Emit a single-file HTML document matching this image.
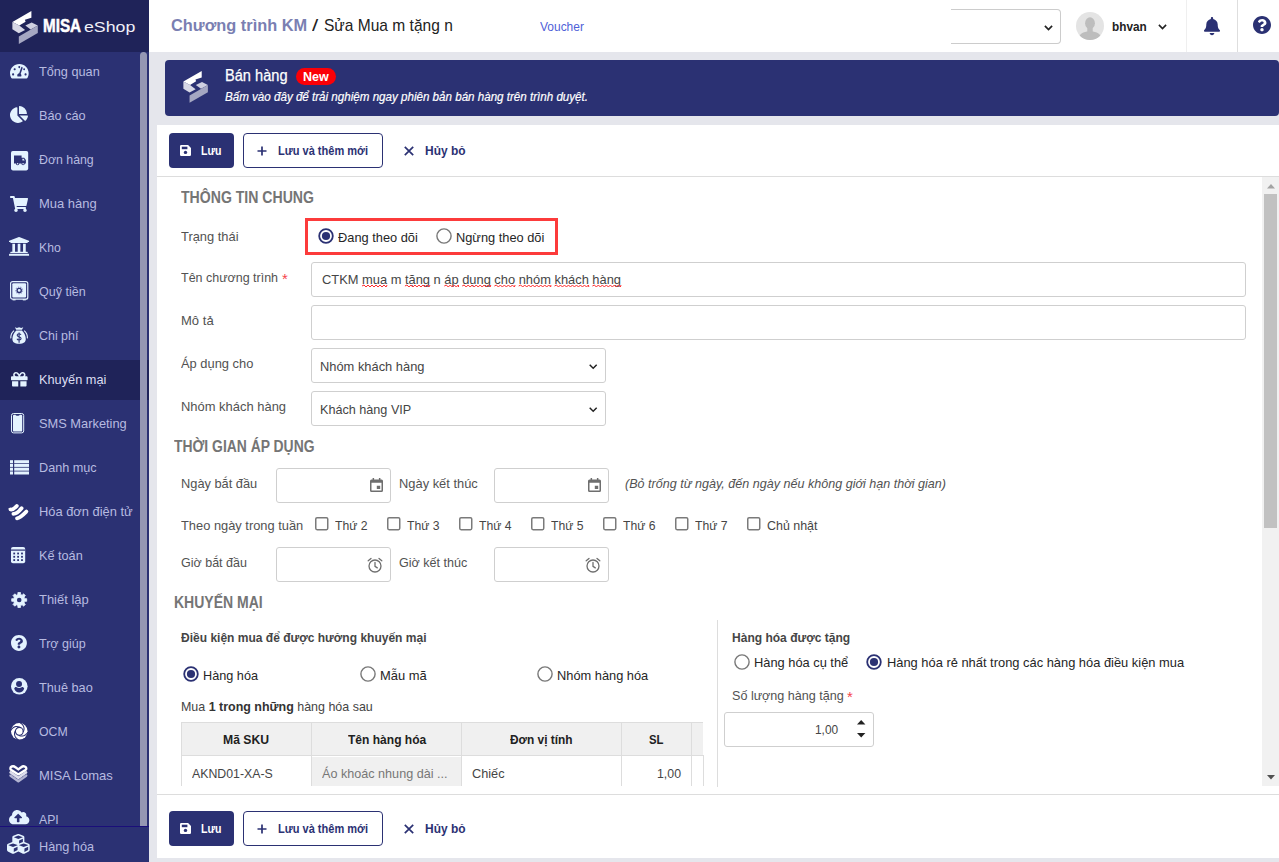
<!DOCTYPE html>
<html lang="vi">
<head>
<meta charset="utf-8">
<title>MISA eShop - Chương trình KM</title>
<style>
*{box-sizing:border-box;margin:0;padding:0}
html,body{width:1279px;height:862px;overflow:hidden;background:#e5e6ec;font-family:"Liberation Sans",sans-serif;color:#333}
.a{position:absolute}
.t{position:absolute;white-space:nowrap;line-height:20px;height:20px;transform-origin:0 50%}
.b{font-weight:bold}
.i{font-style:italic}
#side{position:absolute;left:0;top:0;width:149px;height:862px;background:#2b3173}
#logo{position:absolute;left:0;top:0;width:149px;height:52px;background:#1f2359}
.mi{position:absolute;left:39px;font-size:14px;line-height:20px;height:20px;color:#b5b9df;white-space:nowrap}
.ic{position:absolute;overflow:visible}
#top{position:absolute;left:149px;top:0;width:1130px;height:52px;background:#fff}
#banner{position:absolute;left:165px;top:60px;width:1114px;height:56px;background:#2b3173;border-radius:4px}
.panel{position:absolute;background:#fff}
.inp{position:absolute;background:#fff;border:1px solid #cfcfcf;border-radius:3px}
.btn{position:absolute;border-radius:4px}
.lbl{color:#444;font-size:13px}
.rad{position:absolute;width:16px;height:16px;border-radius:50%;border:1.5px solid #767676;background:#fff}
.rad.on{border:2px solid #2b3173}
.rad.on::after{content:"";position:absolute;left:2px;top:2px;width:8px;height:8px;border-radius:50%;background:#2b3173}
.chk{position:absolute;width:13px;height:13px;border:1.5px solid #767676;border-radius:2px;background:#fff}
</style>
</head>
<body>
<div id="side">
<div id="logo"></div>
<div class="a" style="left:0px;top:360px;width:149px;height:40px;background:#1f2359"></div>
<svg class="ic" style="left:11.7px;top:10.6px" width="26" height="33" viewBox="0 0 26 33" ><polygon fill="#ffffff" points="19.40,0.00 0.40,11.00 7.30,14.60 13.60,10.70 12.90,8.80 19.40,6.80"/><polygon fill="#d7d8e6" points="0.40,11.00 0.40,18.30 6.80,22.20 13.10,19.00 7.30,14.60"/><polygon fill="#cfd0e1" points="13.30,14.60 19.70,11.50 25.80,14.40 18.70,18.50"/><polygon fill="#a5a7c2" points="25.80,14.40 25.80,21.90 6.80,32.90 6.80,25.40"/></svg>
<div class="t b" style="left:42.8px;top:15.5px;font-size:17.5px;color:#fff;-webkit-text-stroke:0.500px #fff;transform-origin:0 50%;transform:scaleX(0.870)">MISA</div>
<div class="t" style="left:83.500px;top:16.700px;font-size:15.500px;color:#f0f0f8;transform-origin:0 50%;transform:scaleX(1.145);font-weight:normal">eShop</div>
<div class="t" style="left:39.3px;top:62.20px;font-size:13.5px;color:#b7bbe0;transform:scaleX(0.9403);">Tổng quan</div>
<div class="t" style="left:39.3px;top:106.20px;font-size:13.5px;color:#b7bbe0;transform:scaleX(0.9427);">Báo cáo</div>
<div class="t" style="left:39.3px;top:150.20px;font-size:13.5px;color:#b7bbe0;transform:scaleX(0.9133);">Đơn hàng</div>
<div class="t" style="left:39.3px;top:194.20px;font-size:13.5px;color:#b7bbe0;transform:scaleX(0.9610);">Mua hàng</div>
<div class="t" style="left:39.3px;top:238.20px;font-size:13.5px;color:#b7bbe0;transform:scaleX(0.9034);">Kho</div>
<div class="t" style="left:39.3px;top:282.20px;font-size:13.5px;color:#b7bbe0;transform:scaleX(0.9289);">Quỹ tiền</div>
<div class="t" style="left:39.3px;top:326.20px;font-size:13.5px;color:#b7bbe0;transform:scaleX(0.9211);">Chi phí</div>
<div class="t" style="left:39.3px;top:370.20px;font-size:13.5px;color:#dcdef2;transform:scaleX(0.9440);">Khuyến mại</div>
<div class="t" style="left:39.3px;top:414.20px;font-size:13.5px;color:#b7bbe0;transform:scaleX(0.9504);">SMS Marketing</div>
<div class="t" style="left:39.3px;top:458.20px;font-size:13.5px;color:#b7bbe0;transform:scaleX(0.9378);">Danh mục</div>
<div class="t" style="left:39.3px;top:502.20px;font-size:13.5px;color:#b7bbe0;transform:scaleX(0.9542);">Hóa đơn điện tử</div>
<div class="t" style="left:39.3px;top:546.20px;font-size:13.5px;color:#b7bbe0;transform:scaleX(0.9391);">Kế toán</div>
<div class="t" style="left:39.3px;top:590.20px;font-size:13.5px;color:#b7bbe0;transform:scaleX(0.9599);">Thiết lập</div>
<div class="t" style="left:39.3px;top:634.20px;font-size:13.5px;color:#b7bbe0;transform:scaleX(0.9272);">Trợ giúp</div>
<div class="t" style="left:39.3px;top:678.20px;font-size:13.5px;color:#b7bbe0;transform:scaleX(0.9414);">Thuê bao</div>
<div class="t" style="left:39.3px;top:722.20px;font-size:13.5px;color:#b7bbe0;transform:scaleX(0.9112);">OCM</div>
<div class="t" style="left:39.3px;top:766.20px;font-size:13.5px;color:#b7bbe0;transform:scaleX(0.9630);">MISA Lomas</div>
<div class="t" style="left:39.3px;top:810.20px;font-size:13.5px;color:#b7bbe0;transform:scaleX(0.9054);">API</div>
<div class="a" style="left:0px;top:826px;width:149px;height:36px;background:#2b3173;border-top:1px solid #1a0e7a"></div>
<div class="t" style="left:39.3px;top:837.20px;font-size:13.5px;color:#b7bbe0;transform:scaleX(0.9394);">Hàng hóa</div>
<div class="a" style="left:140px;top:52px;width:7px;height:774px;background:#9597b3;border-radius:3.500px 3.500px 0 0"></div>
<svg class="ic" style="left:9.90px;top:63.58px" width="18.70" height="14.54" viewBox="0 32 576 448"><path fill="#e4f3ff" d="M288 32C128.94 32 0 160.94 0 320c0 52.8 14.25 102.26 39.06 144.8 5.61 9.62 16.3 15.2 27.44 15.2h443c11.14 0 21.83-5.58 27.44-15.2C561.75 422.26 576 372.8 576 320c0-159.06-128.94-288-288-288zm0 64c14.71 0 26.58 10.13 30.32 23.65-1.11 2.26-2.64 4.23-3.45 6.67l-9.22 27.67c-5.13 3.49-10.97 6.01-17.64 6.01-17.67 0-32-14.33-32-32S270.33 96 288 96zM96 384c-17.67 0-32-14.33-32-32s14.33-32 32-32 32 14.33 32 32-14.33 32-32 32zm48-160c-17.67 0-32-14.33-32-32s14.33-32 32-32 32 14.33 32 32-14.33 32-32 32zm246.77-72.41l-61.33 184C343.13 347.33 352 364.54 352 384c0 11.72-3.38 22.55-8.88 32H232.88c-5.5-9.45-8.88-20.28-8.88-32 0-33.94 26.5-61.43 59.9-63.59l61.34-184.01c4.17-12.56 17.73-19.45 30.36-15.17 12.57 4.19 19.35 17.79 15.17 30.36zm14.66 57.2l15.52-46.55c3.47-1.29 7.13-2.23 11.05-2.23 17.67 0 32 14.33 32 32s-14.33 32-32 32c-11.38-.01-20.89-6.28-26.57-15.22zM480 384c-17.67 0-32-14.33-32-32s14.33-32 32-32 32 14.33 32 32-14.33 32-32 32z"/></svg>
<svg class="ic" style="left:10.00px;top:105.98px" width="18.00" height="16.94" viewBox="0 0 544 512"><path fill="#e4f3ff" d="M527.79 288H290.5l158.03 158.03c6.04 6.04 15.98 6.53 22.19.68 38.7-36.46 65.32-85.61 73.13-140.86 1.34-9.46-6.51-17.85-16.06-17.85zm-15.83-64.8C503.72 103.74 408.26 8.28 288.8.04 279.68-.59 272 7.1 272 16.24V240h223.77c9.14 0 16.82-7.68 16.19-16.8zM224 288V50.71c0-9.55-8.39-17.4-17.84-16.06C86.99 51.49-4.1 155.6.14 280.37 4.5 408.51 114.83 513.59 243.03 511.98c50.4-.63 96.97-16.87 135.26-44.03 7.9-5.6 8.42-17.23 1.570-24.08L224 288z"/></svg>
<svg class="ic" style="left:10.9px;top:150.7px" width="17.2" height="19.4" viewBox="0 0 17.2 19.4"><rect x="0" y="0" width="17.2" height="19.4" rx="1.8" fill="#e4f3ff"/><path fill="#2b3173" d="M3 4.6h7.6v2.2h2.6l1.7 2.2v3.6h-1.1a1.7 1.7 0 0 1-3.4 0H8.300a1.700 1.700 0 0 1-3.400 0H3zM11.400 7.800v1.600h2.300l-1.100-1.600z"/><circle cx="6.6" cy="12.700" r="0.800" fill="#e4f3ff"/><circle cx="12.100" cy="12.700" r="0.800" fill="#e4f3ff"/></svg>
<svg class="ic" style="left:10.00px;top:196.35px" width="18.00" height="16.00" viewBox="0 0 576 512"><path fill="#e4f3ff" d="M528.12 301.319l47.273-208C578.806 78.301 567.391 64 551.99 64H159.208l-9.166-44.81C147.758 8.021 137.93 0 126.529 0H24C10.745 0 0 10.745 0 24v16c0 13.255 10.745 24 24 24h69.883l70.248 343.435C147.325 417.1 136 435.222 136 456c0 30.928 25.072 56 56 56s56-25.072 56-56c0-15.674-6.447-29.835-16.824-40h209.647C430.447 426.165 424 440.326 424 456c0 30.928 25.072 56 56 56s56-25.072 56-56c0-22.172-12.888-41.332-31.579-50.405l5.517-24.276c3.413-15.018-8.002-29.319-23.403-29.319H218.117l-6.545-32h293.145c11.206 0 20.920-7.754 23.403-18.681z"/></svg>
<svg class="ic" style="left:8.50px;top:236.62px" width="20.10" height="18.76" viewBox="16 32 480 448"><path fill="#e4f3ff" d="M496 128v16a8 8 0 0 1-8 8h-24v12c0 6.627-5.373 12-12 12H60c-6.627 0-12-5.373-12-12v-12H24a8 8 0 0 1-8-8v-16a8 8 0 0 1 4.941-7.392l232-88a7.996 7.996 0 0 1 6.118 0l232 88A8 8 0 0 1 496 128zm-24 304H40c-13.255 0-24 10.745-24 24v16a8 8 0 0 0 8 8h464a8 8 0 0 0 8-8v-16c0-13.255-10.745-24-24-24zM96 192v192H60c-6.627 0-12 5.373-12 12v20h416v-20c0-6.627-5.373-12-12-12h-36V192h-64v192h-64V192h-64v192h-64V192H96z"/></svg>
<svg class="ic" style="left:9.9px;top:281.3px" width="18.4" height="19.700" viewBox="0 0 18.400 19.700"><rect x="0.600" y="0.600" width="17.200" height="17.600" rx="2" fill="none" stroke="#e4f3ff" stroke-width="1.200"/><rect x="2.300" y="2.300" width="13.800" height="14.200" rx="1" fill="#e4f3ff"/><rect x="2.600" y="18.200" width="3" height="1.200" fill="#e4f3ff"/><rect x="12.800" y="18.200" width="3" height="1.200" fill="#e4f3ff"/><circle cx="9.200" cy="9.400" r="3.300" fill="none" stroke="#9aa0cc" stroke-width="1.400" stroke-dasharray="1.300 1"/><circle cx="9.200" cy="9.400" r="2.100" fill="none" stroke="#2b3173" stroke-width="1.300"/></svg>
<svg class="ic" style="left:9.9px;top:326.700px" width="18.200" height="16.800" viewBox="0 0 18.200 16.800"><path fill="#e4f3ff" d="M6.200 2.700L4.900 0.300 7 1 9.100 0.200 11.200 1 13.300 0.300 12 2.700z"/><path fill="#e4f3ff" d="M6.300 3.400h5.600c2.200 1.900 3.900 5.300 3.900 8.600 0 3.200-2.100 4.700-6.700 4.700s-6.700-1.500-6.700-4.700c0-3.300 1.700-6.700 3.900-8.600z"/><path fill="none" stroke="#e4f3ff" stroke-width="1.100" d="M4 3.600C1.700 5.500 0.600 8.200 0.800 11.400M14.200 3.600c2.300 1.900 3.400 4.600 3.200 7.800"/><path fill="none" stroke="#2b3173" stroke-width="1.100" d="M11 7.900c-.3-.8-1-1.200-1.900-1.200-1.100 0-1.900.6-1.900 1.500 0 2.100 3.900 1.100 3.900 3.300 0 .900-.800 1.500-2 1.500-1 0-1.800-.500-2.100-1.300M9.100 5.400v10.300"/></svg>
<svg class="ic" style="left:10.90px;top:371.74px" width="16.60" height="14.53" viewBox="0 32 512 448"><path fill="#e4f3ff" d="M32 448c0 17.700 14.300 32 32 32h160V320H32v128zm256 32h160c17.700 0 32-14.300 32-32V320H288v160zm192-320h-42.100c6.200-12.100 10.100-25.500 10.100-40 0-48.500-39.500-88-88-88-41.600 0-68.500 21.300-103 68.300-34.500-47-61.400-68.300-103-68.300-48.500 0-88 39.500-88 88 0 14.500 3.800 27.900 10.100 40H32c-17.700 0-32 14.300-32 32v80c0 8.800 7.200 16 16 16h480c8.800 0 16-7.200 16-16v-80c0-17.700-14.300-32-32-32zm-326.100 0c-22.100 0-40-17.900-40-40s17.900-40 40-40c19.900 0 34.600 3.300 86.100 80h-86.100zm206.100 0h-86.100c51.400-76.500 65.700-80 86.100-80 22.100 0 40 17.900 40 40s-17.900 40-40 40z"/></svg>
<svg class="ic" style="left:10.900px;top:412.700px" width="13.200" height="20.400" viewBox="0 0 13.200 20.400"><rect x="0.500" y="0.500" width="12.200" height="19.400" rx="2" fill="none" stroke="#e4f3ff" stroke-width="1"/><path fill="#e4f3ff" d="M2 3a1.200 1.200 0 0 1 1.200-1.200H4.500c.3.700.8 1 2.100 1s1.800-.3 2.100-1h1.300A1.200 1.200 0 0 1 11.200 3v14.400a1.200 1.200 0 0 1-1.200 1.200H3.200A1.200 1.200 0 0 1 2 17.400z"/></svg>
<svg class="ic" style="left:9.900px;top:459.600px" width="19" height="14.800" viewBox="0 0 19 14.800"><rect x="0" y="0.2" width="3" height="3" fill="#e4f3ff"/><rect x="4.200" y="0.2" width="14.800" height="3" fill="#e4f3ff"/><rect x="0" y="3.9" width="3" height="3" fill="#e4f3ff"/><rect x="4.200" y="3.9" width="14.800" height="3" fill="#e4f3ff"/><rect x="0" y="7.7" width="3" height="3" fill="#e4f3ff"/><rect x="4.200" y="7.7" width="14.800" height="3" fill="#e4f3ff"/><rect x="0" y="11.5" width="3" height="3" fill="#e4f3ff"/><rect x="4.200" y="11.5" width="14.800" height="3" fill="#e4f3ff"/></svg>
<svg class="ic" style="left:8.200px;top:503.700px" width="20.400" height="16.400" viewBox="0 0 20.400 16.400"><g fill="none" stroke="#ffffff" stroke-width="3.800" stroke-linecap="round"><path d="M2.600 5.500C5 6 6.500 4.500 8.800 1.900"/><path d="M5.400 9.800C8.500 9.800 11 7.500 13.600 4.300"/><path d="M9 14.300c3.400-.5 6.200-3.500 9.400-6.800"/></g><path fill="#ffffff" d="M0 4.500l3.500 0 -1 2.500z"/></svg>
<svg class="ic" style="left:10.900px;top:547px" width="14.200" height="16.200" viewBox="0 0 14.200 16.200"><rect x="0" y="0" width="14.200" height="16.200" rx="2" fill="#e4f3ff"/><rect x="0" y="2.500" width="14.200" height="1.200" fill="#2b3173"/><rect x="2.3" y="5.6" width="1.800" height="1.800" fill="#2b3173"/><rect x="2.3" y="8.9" width="1.800" height="1.800" fill="#2b3173"/><rect x="2.3" y="12.2" width="1.800" height="1.800" fill="#2b3173"/><rect x="6.2" y="5.6" width="1.800" height="1.800" fill="#2b3173"/><rect x="6.2" y="8.9" width="1.800" height="1.800" fill="#2b3173"/><rect x="6.2" y="12.2" width="1.800" height="1.800" fill="#2b3173"/><rect x="10.1" y="5.6" width="1.800" height="1.800" fill="#2b3173"/><rect x="10.1" y="8.9" width="1.800" height="1.800" fill="#2b3173"/><rect x="10.1" y="12.2" width="1.800" height="1.800" fill="#2b3173"/></svg>
<svg class="ic" style="left:10.900px;top:591.700px" width="16.400" height="16" viewBox="0 0 16.400 16"><polygon points="6.89,0.51 9.51,0.51 9.53,2.46 11.18,3.14 12.57,1.78 14.42,3.63 13.06,5.02 13.74,6.67 15.69,6.69 15.69,9.31 13.74,9.33 13.06,10.98 14.42,12.37 12.57,14.22 11.18,12.86 9.53,13.54 9.51,15.49 6.89,15.49 6.87,13.54 5.22,12.86 3.83,14.22 1.98,12.37 3.34,10.98 2.66,9.33 0.71,9.31 0.71,6.69 2.66,6.67 3.34,5.02 1.98,3.63 3.83,1.78 5.22,3.14 6.87,2.46" fill="#e4f3ff" stroke="#e4f3ff" stroke-width="0.800" stroke-linejoin="round"/><circle cx="8.2" cy="8" r="2.3" fill="#2b3173"/></svg>
<svg class="ic" style="left:11.40px;top:635.45px" width="15.90" height="15.90" viewBox="8 8 496 496"><path fill="#e4f3ff" d="M504 256c0 136.997-111.043 248-248 248S8 392.997 8 256C8 119.083 119.043 8 256 8s248 111.083 248 248zM262.655 90c-54.497 0-89.255 22.957-116.549 63.758-3.536 5.286-2.353 12.415 2.715 16.258l34.699 26.310c5.205 3.947 12.621 3.008 16.665-2.122 17.864-22.658 30.113-35.797 57.303-35.797 20.429 0 45.698 13.148 45.698 32.958 0 14.976-12.363 22.667-32.534 33.976C247.128 238.528 216 254.941 216 296v4c0 6.627 5.373 12 12 12h56c6.627 0 12-5.373 12-12v-1.333c0-28.462 83.186-29.647 83.186-106.667 0-58.002-60.165-102-116.531-102zM256 338c-25.365 0-46 20.635-46 46 0 25.364 20.635 46 46 46s46-20.636 46-46c0-25.365-20.635-46-46-46z"/></svg>
<svg class="ic" style="left:11.050px;top:677.800px" width="16.600" height="16.600" viewBox="0 0 16.600 16.600"><circle cx="8.300" cy="8.300" r="8.300" fill="#e4f3ff"/><circle cx="8.050" cy="6.050" r="3" fill="#2b3173"/><path fill="#2b3173" d="M3.200 10.500C4.200 8.800 5 9 5.600 9.300 7 10.200 9.300 10.200 10.700 9.300 11.300 9 12.100 8.800 13.200 10.500 12.500 13 10.500 14.600 8.200 14.600 5.900 14.600 3.900 13 3.200 10.500z"/></svg>
<svg class="ic" style="left:10.800px;top:722.800px" width="16.600" height="16.600" viewBox="0 0 16.600 16.600"><circle cx="8.3" cy="8.3" r="8.3" fill="#ffffff"/><circle cx="8.3" cy="8.3" r="3.900" fill="none" stroke="#2b3173" stroke-width="1.100"/><path d="M8.98 4.46 L7.91 3.95 L6.95 3.65 L5.95 3.54 L4.93 3.60 L3.91 3.85 L2.92 4.27 L1.99 4.86 L1.13 5.61 L0.37 6.52 L-0.27 7.55" fill="none" stroke="#2b3173" stroke-width="1.050"/><path d="M12.14 8.98 L12.65 7.91 L12.95 6.95 L13.06 5.95 L13.00 4.93 L12.75 3.91 L12.33 2.92 L11.74 1.99 L10.99 1.13 L10.08 0.37 L9.05 -0.27" fill="none" stroke="#2b3173" stroke-width="1.050"/><path d="M7.62 12.14 L8.69 12.65 L9.65 12.95 L10.65 13.06 L11.67 13.00 L12.69 12.75 L13.68 12.33 L14.61 11.74 L15.47 10.99 L16.23 10.08 L16.87 9.05" fill="none" stroke="#2b3173" stroke-width="1.050"/><path d="M4.46 7.62 L3.95 8.69 L3.65 9.65 L3.54 10.65 L3.60 11.67 L3.85 12.69 L4.27 13.68 L4.86 14.61 L5.61 15.47 L6.52 16.23 L7.55 16.87" fill="none" stroke="#2b3173" stroke-width="1.050"/></svg>
<svg class="ic" style="left:8.600px;top:765.400px" width="18.700" height="18" viewBox="0 0 18.700 18"><path fill="none" stroke="#b3b5d2" stroke-width="2.600" stroke-linejoin="round" stroke-linecap="round" d="M1.600 10.600L9.350 16.100 17.100 10.600"/><path fill="none" stroke="#dddeec" stroke-width="2.600" stroke-linejoin="round" stroke-linecap="round" d="M1.600 7.400L9.350 12.900 17.100 7.400"/><path fill="none" stroke="#2b3173" stroke-width="0.500" stroke-dasharray="1 0.800" d="M1.200 9.100L9.350 14.700 17.500 9.100"/><path fill="none" stroke="#ffffff" stroke-width="2.400" stroke-linejoin="round" d="M9.350 9.400L2.300 5C.900 4 1.100 2.100 2.800 1.500 4.200 1 5.500 1.400 6.500 2.300L9.350 4.400 12.200 2.300c1-.900 2.300-1.300 3.700-.800 1.700.600 1.900 2.500.500 3.500z"/></svg>
<svg class="ic" style="left:8.90px;top:810.11px" width="20.40" height="14.28" viewBox="0 32 640 448"><path fill="#e4f3ff" d="M537.600 226.600c4.100-10.700 6.400-22.400 6.400-34.600 0-53-43-96-96-96-19.700 0-38.100 6-53.300 16.200C367 64.200 315.300 32 256 32c-88.400 0-160 71.600-160 160 0 2.700.100 5.400.200 8.100C40.200 219.800 0 273.200 0 336c0 79.500 64.500 144 144 144h368c70.700 0 128-57.300 128-128 0-61.900-44-113.600-102.400-125.400zM393.400 288H328v112c0 8.800-7.200 16-16 16h-48c-8.800 0-16-7.200-16-16V288h-65.400c-14.300 0-21.400-17.200-11.300-27.300l105.400-105.400c6.200-6.200 16.400-6.200 22.600 0l105.400 105.400c10.100 10.100 2.900 27.300-11.300 27.300z"/></svg>
<svg class="ic" style="left:6.80px;top:834.37px" width="22.70" height="19.86" viewBox="0 32 512 448"><path fill="#e4f3ff" d="M488.600 250.200L392 214V105.500c0-15-9.300-28.400-23.400-33.700l-100-37.500c-8.100-3.100-17.100-3.100-25.300 0l-100 37.500c-14.100 5.300-23.400 18.700-23.400 33.700V214l-96.600 36.200C9.300 255.500 0 268.900 0 283.900V394c0 13.600 7.700 26.100 19.900 32.200l100 50c10.100 5.100 22.100 5.100 32.200 0l103.900-52 103.900 52c10.100 5.100 22.100 5.100 32.200 0l100-50c12.200-6.100 19.900-18.600 19.900-32.200V283.900c0-15-9.300-28.400-23.400-33.700zM358 214.800l-85 31.900v-68.200l85-37v73.300zM154 104.100l102-38.200 102 38.200v.600l-102 41.400-102-41.400v-.600zm84 291.100l-85 42.500v-79.100l85-38.800v75.400zm0-112l-102 41.400-102-41.400v-.600l102-38.200 102 38.200v.600zm240 112l-85 42.500v-79.100l85-38.800v75.400zm0-112l-102 41.400-102-41.400v-.600l102-38.200 102 38.200v.600z"/></svg>
</div>
<div id="top"></div>
<div class="t b" style="left:170.6px;top:13.60px;font-size:17px;color:#7a7fb2;line-height:24px;height:24px;transform:scaleX(0.9630);">Chương trình KM</div>
<div class="t" style="left:311.9px;top:13.60px;font-size:17px;color:#222;line-height:24px;height:24px;transform:scaleX(1.3126);">/</div>
<div class="t" style="left:323.7px;top:13.60px;font-size:17px;color:#222;line-height:24px;height:24px;transform:scaleX(0.9145);">Sửa Mua m tặng n</div>
<div class="t" style="left:540.2px;top:16.70px;font-size:12.5px;color:#4f5fd8;transform:scaleX(0.9571);">Voucher</div>
<div class="a" style="left:951px;top:9px;width:110px;height:35px;border:1px solid #cccccc;border-left:none;border-radius:0 4px 4px 0;background:#fff"></div>
<svg class="ic" style="left:1044px;top:25px" width="9" height="6" viewBox="0 0 9 6" ><path d="M0.900 0.900L4.500 4.500 8.100 0.900" fill="none" stroke="#222" stroke-width="1.700"/></svg>
<svg class="ic" style="left:1076px;top:12px" width="28" height="28" viewBox="0 0 28 28"><defs><clipPath id="avc"><circle cx="14" cy="14" r="14"/></clipPath></defs><circle cx="14" cy="14" r="14" fill="#e4e4e4"/><g clip-path="url(#avc)" fill="#bdbdbd"><ellipse cx="14" cy="11.200" rx="4.900" ry="5.900"/><path d="M2.500 28c0-5.500 3-7.300 8.500-8.600h6c5.500 1.300 8.500 3.100 8.500 8.600z"/><rect x="11.300" y="15" width="5.400" height="6"/></g></svg>
<div class="t b" style="left:1112px;top:17.00px;font-size:13.5px;color:#222;transform:scaleX(0.8728);">bhvan</div>
<svg class="ic" style="left:1157.5px;top:24px" width="9" height="6" viewBox="0 0 9 6" ><path d="M0.900 0.900L4.500 4.500 8.100 0.900" fill="none" stroke="#222" stroke-width="1.600"/></svg>
<div class="a" style="left:1186px;top:0px;width:1px;height:52px;background:#efefef"></div>
<div class="a" style="left:1237px;top:0px;width:1px;height:52px;background:#dedede"></div>
<svg class="ic" style="left:1204px;top:16.500px" width="16" height="18.300" viewBox="0 0 448 512"><path fill="#2b3173" d="M224 512c35.320 0 63.970-28.650 63.970-64H160.030c0 35.350 28.650 64 63.970 64zm215.390-149.710c-19.320-20.760-55.470-51.990-55.470-154.290 0-77.700-54.480-139.900-127.940-155.160V32c0-17.670-14.320-32-31.980-32s-31.980 14.330-31.980 32v20.840C118.560 68.100 64.080 130.300 64.080 208c0 102.300-36.150 133.530-55.470 154.290-6 6.450-8.660 14.160-8.610 21.710.110 16.400 12.980 32 32.100 32h383.800c19.120 0 32-15.600 32.100-32 .050-7.550-2.610-15.270-8.610-21.710z"/></svg>
<svg class="ic" style="left:1252.500px;top:16px" width="18" height="18" viewBox="8 8 496 496"><path fill="#2b3173" d="M504 256c0 136.997-111.043 248-248 248S8 392.997 8 256C8 119.083 119.043 8 256 8s248 111.083 248 248zM262.655 90c-54.497 0-89.255 22.957-116.549 63.758-3.536 5.286-2.353 12.415 2.715 16.258l34.699 26.310c5.205 3.947 12.621 3.008 16.665-2.122 17.864-22.658 30.113-35.797 57.303-35.797 20.429 0 45.698 13.148 45.698 32.958 0 14.976-12.363 22.667-32.534 33.976C247.128 238.528 216 254.941 216 296v4c0 6.627 5.373 12 12 12h56c6.627 0 12-5.373 12-12v-1.333c0-28.462 83.186-29.647 83.186-106.667 0-58.002-60.165-102-116.531-102zM256 338c-25.365 0-46 20.635-46 46 0 25.364 20.635 46 46 46s46-20.636 46-46c0-25.365-20.635-46-46-46z"/></svg>
<div id="banner"></div>
<svg class="ic" style="left:182.5px;top:71px" width="25.09" height="31.845" viewBox="0 0 26 33" ><polygon fill="#ffffff" points="19.40,0.00 0.40,11.00 7.30,14.60 13.60,10.70 12.90,8.80 19.40,6.80"/><polygon fill="#d7d8e6" points="0.40,11.00 0.40,18.30 6.80,22.20 13.10,19.00 7.30,14.60"/><polygon fill="#cfd0e1" points="13.30,14.60 19.70,11.50 25.80,14.40 18.70,18.50"/><polygon fill="#a5a7c2" points="25.80,14.40 25.80,21.90 6.80,32.90 6.80,25.40"/></svg>
<div class="t" style="left:225px;top:66.30px;font-size:16px;color:#fff;transform:scaleX(0.9123);-webkit-text-stroke:0.250px #fff;">Bán hàng</div>
<div class="a" style="left:296px;top:68px;width:39.5px;height:17px;background:#fb0007;border-radius:9px"></div>
<div class="t b" style="left:303px;top:66.50px;font-size:12.5px;color:#fff;transform:scaleX(1.0019);">New</div>
<div class="t i" style="left:225px;top:86.50px;font-size:12px;color:#fff;transform:scaleX(0.9665);-webkit-text-stroke:0.200px #fff;">Bấm vào đây để trải nghiệm ngay phiên bản bán hàng trên trình duyệt.</div>
<div class="panel" style="left:157px;top:125px;width:1122px;height:733px;"></div>
<div class="btn" style="left:169px;top:133px;width:65px;height:35px;background:#2b3173"></div>
<svg class="ic" style="left:179.5px;top:144.5px" width="11" height="11" viewBox="0 0 11 11" ><path fill="#fff" d="M1.200 0h6.900L11 2.900v6.900A1.200 1.200 0 0 1 9.800 11H1.200A1.200 1.200 0 0 1 0 9.800V1.200A1.200 1.200 0 0 1 1.200 0z"/><rect x="1.800" y="1.700" width="5.600" height="2.500" fill="#2b3173"/><circle cx="5.500" cy="7.400" r="1.700" fill="#2b3173"/></svg>
<div class="t b" style="left:201px;top:140.50px;font-size:13px;color:#fff;transform:scaleX(0.8104);">Lưu</div>
<div class="btn" style="left:243px;top:133px;width:140px;height:35px;background:#fff;border:1px solid #2b3173"></div>
<svg class="ic" style="left:256.5px;top:145.5px" width="10" height="10" viewBox="0 0 10 10" ><path d="M5 0.500v9M0.500 5h9" stroke="#2b3173" stroke-width="1.700" fill="none"/></svg>
<div class="t b" style="left:277.5px;top:140.50px;font-size:13px;color:#2b3173;transform:scaleX(0.8485);">Lưu và thêm mới</div>
<svg class="ic" style="left:404px;top:146px" width="10" height="10" viewBox="0 0 10 10" ><path d="M0.800 0.800l8.400 8.400M9.200 0.800L0.800 9.200" stroke="#2b3173" stroke-width="1.700" fill="none"/></svg>
<div class="t b" style="left:425px;top:140.50px;font-size:13px;color:#2b3173;transform:scaleX(0.9194);">Hủy bỏ</div>
<div class="a" style="left:157px;top:176px;width:1122px;height:1px;background:#dddddd"></div>
<div class="a" style="left:157px;top:794px;width:1122px;height:1px;background:#dddddd"></div>
<div class="btn" style="left:169px;top:811px;width:65px;height:35px;background:#2b3173"></div>
<svg class="ic" style="left:179.5px;top:822.5px" width="11" height="11" viewBox="0 0 11 11" ><path fill="#fff" d="M1.200 0h6.900L11 2.900v6.900A1.200 1.200 0 0 1 9.800 11H1.200A1.200 1.200 0 0 1 0 9.800V1.200A1.200 1.200 0 0 1 1.200 0z"/><rect x="1.800" y="1.700" width="5.600" height="2.500" fill="#2b3173"/><circle cx="5.500" cy="7.400" r="1.700" fill="#2b3173"/></svg>
<div class="t b" style="left:201px;top:818.50px;font-size:13px;color:#fff;transform:scaleX(0.8104);">Lưu</div>
<div class="btn" style="left:243px;top:811px;width:140px;height:35px;background:#fff;border:1px solid #2b3173"></div>
<svg class="ic" style="left:256.5px;top:823.5px" width="10" height="10" viewBox="0 0 10 10" ><path d="M5 0.500v9M0.500 5h9" stroke="#2b3173" stroke-width="1.700" fill="none"/></svg>
<div class="t b" style="left:277.5px;top:818.50px;font-size:13px;color:#2b3173;transform:scaleX(0.8485);">Lưu và thêm mới</div>
<svg class="ic" style="left:404px;top:824px" width="10" height="10" viewBox="0 0 10 10" ><path d="M0.800 0.800l8.400 8.400M9.200 0.800L0.800 9.200" stroke="#2b3173" stroke-width="1.700" fill="none"/></svg>
<div class="t b" style="left:425px;top:818.50px;font-size:13px;color:#2b3173;transform:scaleX(0.9194);">Hủy bỏ</div>
<div class="t b" style="left:181.25px;top:187.50px;font-size:16px;color:#757575;transform:scaleX(0.8802);">THÔNG TIN CHUNG</div>
<div class="t" style="left:181.25px;top:226.50px;font-size:13px;color:#525252;transform:scaleX(0.9906);">Trạng thái</div>
<div class="a" style="left:305px;top:218px;width:253px;height:37px;border:3px solid #fc3b3b"></div>
<svg class="ic" style="left:317.7px;top:228.2px" width="16" height="16" viewBox="0 0 16 16" ><circle cx="8" cy="8" r="6.800" fill="#fff" stroke="#2b3173" stroke-width="1.800"/><circle cx="8" cy="8" r="4.100" fill="#2b3173"/></svg>
<div class="t" style="left:338px;top:227.50px;font-size:13px;color:#262626;transform:scaleX(0.9858);">Đang theo dõi</div>
<svg class="ic" style="left:436.1px;top:228.2px" width="16" height="16" viewBox="0 0 16 16" ><circle cx="8" cy="8" r="7.100" fill="#fff" stroke="#787878" stroke-width="1.400"/></svg>
<div class="t" style="left:456.2px;top:227.50px;font-size:13px;color:#262626;transform:scaleX(0.9849);">Ngừng theo dõi</div>
<div class="t" style="left:181.25px;top:267.50px;font-size:13px;color:#525252;transform:scaleX(0.9604);">Tên chương trình</div>
<div class="t" style="left:281.6px;top:268.60px;font-size:15px;color:#f5444a;transform:scaleX(0.9936);">*</div>
<div class="inp" style="left:311px;top:262px;width:935px;height:35px;"></div>
<div class="t" style="left:322px;top:270px;font-size:13px;color:#454545;transform:scaleX(0.9898)">CTKM mua m tặng n áp dụng cho nhóm khách hàng</div>
<svg class="ic" style="left:322px;top:285px" width="300" height="3" viewBox="0 0 300 3" ><path d="M40.03 1.00 L42.03 0.00 L44.03 2.00 L46.03 0.00 L48.03 2.00 L50.03 0.00 L52.03 2.00 L54.03 0.00 L56.03 2.00 L58.03 0.00 L60.03 2.00 L62.03 0.00 L64.03 2.00 L65.06 0.00" fill="none" stroke="#ff2a2a" stroke-width="1" stroke-linejoin="round"/><path d="M82.93 1.00 L84.93 0.00 L86.93 2.00 L88.93 0.00 L90.93 2.00 L92.93 0.00 L94.93 2.00 L96.93 0.00 L98.93 2.00 L100.93 0.00 L102.93 2.00 L104.93 0.00 L106.93 2.00 L107.98 0.00" fill="none" stroke="#ff2a2a" stroke-width="1" stroke-linejoin="round"/><path d="M122.29 1.00 L124.29 0.00 L126.29 2.00 L128.29 0.00 L130.29 2.00 L132.29 0.00 L134.29 2.00 L136.29 0.00 L136.60 2.00" fill="none" stroke="#ff2a2a" stroke-width="1" stroke-linejoin="round"/><path d="M140.17 1.00 L142.17 0.00 L144.17 2.00 L146.17 0.00 L148.17 2.00 L150.17 0.00 L152.17 2.00 L154.17 0.00 L156.17 2.00 L158.17 0.00 L160.17 2.00 L162.17 0.00 L164.17 2.00 L166.17 0.00 L168.17 2.00 L168.80 0.00" fill="none" stroke="#ff2a2a" stroke-width="1" stroke-linejoin="round"/><path d="M172.38 1.00 L174.38 0.00 L176.38 2.00 L178.38 0.00 L180.38 2.00 L182.38 0.00 L184.38 2.00 L186.38 0.00 L188.38 2.00 L190.38 0.00 L192.38 2.00 L193.12 0.00" fill="none" stroke="#ff2a2a" stroke-width="1" stroke-linejoin="round"/><path d="M196.70 1.00 L198.70 0.00 L200.70 2.00 L202.70 0.00 L204.70 2.00 L206.70 0.00 L208.70 2.00 L210.70 0.00 L212.70 2.00 L214.70 0.00 L216.70 2.00 L218.70 0.00 L220.70 2.00 L222.70 0.00 L224.70 2.00 L226.70 0.00 L228.70 2.00 L228.89 0.00" fill="none" stroke="#ff2a2a" stroke-width="1" stroke-linejoin="round"/><path d="M232.46 1.00 L234.46 0.00 L236.46 2.00 L238.46 0.00 L240.46 2.00 L242.46 0.00 L244.46 2.00 L246.46 0.00 L248.46 2.00 L250.46 0.00 L252.46 2.00 L254.46 0.00 L256.46 2.00 L258.46 0.00 L260.46 2.00 L262.46 0.00 L264.46 2.00 L266.46 0.00 L266.80 2.00" fill="none" stroke="#ff2a2a" stroke-width="1" stroke-linejoin="round"/><path d="M270.37 1.00 L272.37 0.00 L274.37 2.00 L276.37 0.00 L278.37 2.00 L280.37 0.00 L282.37 2.00 L284.37 0.00 L286.37 2.00 L288.37 0.00 L290.37 2.00 L292.37 0.00 L294.37 2.00 L296.37 0.00 L298.37 2.00 L299.00 0.00" fill="none" stroke="#ff2a2a" stroke-width="1" stroke-linejoin="round"/></svg>
<div class="t" style="left:181.25px;top:310.80px;font-size:13px;color:#525252;transform:scaleX(1.0042);">Mô tả</div>
<div class="inp" style="left:311px;top:305px;width:935px;height:35px;"></div>
<div class="t" style="left:181.25px;top:353.75px;font-size:13px;color:#525252;transform:scaleX(0.9911);">Áp dụng cho</div>
<div class="inp" style="left:311px;top:348px;width:295px;height:35px;"></div>
<div class="t" style="left:320px;top:356.70px;font-size:13px;color:#454545;transform:scaleX(0.9904);">Nhóm khách hàng</div>
<svg class="ic" style="left:589.3px;top:364.1px" width="8.4" height="5.5" viewBox="0 0 8.400 5.500" ><path d="M0.700 0.800L4.200 4.200 7.700 0.800" fill="none" stroke="#222" stroke-width="1.500"/></svg>
<div class="t" style="left:181.25px;top:396.50px;font-size:13px;color:#525252;transform:scaleX(0.9956);">Nhóm khách hàng</div>
<div class="inp" style="left:311px;top:391px;width:295px;height:35px;"></div>
<div class="t" style="left:320px;top:399.70px;font-size:13px;color:#454545;transform:scaleX(0.9712);">Khách hàng VIP</div>
<svg class="ic" style="left:589.3px;top:407.1px" width="8.4" height="5.5" viewBox="0 0 8.400 5.500" ><path d="M0.700 0.800L4.200 4.200 7.700 0.800" fill="none" stroke="#222" stroke-width="1.500"/></svg>
<div class="t b" style="left:173.75px;top:436.50px;font-size:16px;color:#757575;transform:scaleX(0.8683);">THỜI GIAN ÁP DỤNG</div>
<div class="t" style="left:181.25px;top:473.50px;font-size:13px;color:#525252;transform:scaleX(0.9860);">Ngày bắt đầu</div>
<div class="inp" style="left:276px;top:468px;width:115px;height:35px;"></div>
<div class="t" style="left:399.25px;top:473.50px;font-size:13px;color:#525252;transform:scaleX(0.9907);">Ngày kết thúc</div>
<div class="inp" style="left:494px;top:468px;width:115px;height:35px;"></div>
<svg class="ic" style="left:370px;top:478px" width="13" height="14" viewBox="0 0 13 14" ><path fill="#6e6e6e" d="M2.600 0h1.500v1.400h4.800V0h1.500v1.400h1.100a1.500 1.500 0 0 1 1.500 1.500v9.600a1.500 1.500 0 0 1-1.500 1.500H1.500A1.500 1.500 0 0 1 0 12.500V2.900a1.500 1.500 0 0 1 1.500-1.500h1.100zM1.500 4.800v7.700h10V4.800zM6.800 7.700h3.400v3.400H6.800z"/></svg>
<svg class="ic" style="left:588px;top:478px" width="13" height="14" viewBox="0 0 13 14" ><path fill="#6e6e6e" d="M2.600 0h1.500v1.400h4.800V0h1.500v1.400h1.100a1.500 1.500 0 0 1 1.500 1.500v9.600a1.500 1.500 0 0 1-1.500 1.500H1.500A1.500 1.500 0 0 1 0 12.500V2.900a1.500 1.500 0 0 1 1.500-1.500h1.100zM1.500 4.800v7.700h10V4.800zM6.800 7.700h3.400v3.400H6.800z"/></svg>
<div class="t i" style="left:625px;top:473.50px;font-size:13px;color:#525252;transform:scaleX(0.9659);">(Bỏ trống từ ngày, đến ngày nếu không giới hạn thời gian)</div>
<div class="t" style="left:181.25px;top:516.30px;font-size:13px;color:#525252;transform:scaleX(0.9892);">Theo ngày trong tuần</div>
<svg class="ic" style="left:315.2px;top:517.2px" width="13.5" height="13.4" viewBox="0 0 13.500 13.400" ><rect x="0.750" y="0.750" width="12" height="11.900" rx="1.300" fill="#fff" stroke="#7a7a7a" stroke-width="1.500"/></svg>
<div class="t" style="left:334.75px;top:515.70px;font-size:13px;color:#454545;transform:scaleX(0.9362);">Thứ 2</div>
<svg class="ic" style="left:387.2px;top:517.2px" width="13.5" height="13.4" viewBox="0 0 13.500 13.400" ><rect x="0.750" y="0.750" width="12" height="11.900" rx="1.300" fill="#fff" stroke="#7a7a7a" stroke-width="1.500"/></svg>
<div class="t" style="left:406.75px;top:515.70px;font-size:13px;color:#454545;transform:scaleX(0.9362);">Thứ 3</div>
<svg class="ic" style="left:459.2px;top:517.2px" width="13.5" height="13.4" viewBox="0 0 13.500 13.400" ><rect x="0.750" y="0.750" width="12" height="11.900" rx="1.300" fill="#fff" stroke="#7a7a7a" stroke-width="1.500"/></svg>
<div class="t" style="left:478.75px;top:515.70px;font-size:13px;color:#454545;transform:scaleX(0.9362);">Thứ 4</div>
<svg class="ic" style="left:531.2px;top:517.2px" width="13.5" height="13.4" viewBox="0 0 13.500 13.400" ><rect x="0.750" y="0.750" width="12" height="11.900" rx="1.300" fill="#fff" stroke="#7a7a7a" stroke-width="1.500"/></svg>
<div class="t" style="left:550.75px;top:515.70px;font-size:13px;color:#454545;transform:scaleX(0.9362);">Thứ 5</div>
<svg class="ic" style="left:603.2px;top:517.2px" width="13.5" height="13.4" viewBox="0 0 13.500 13.400" ><rect x="0.750" y="0.750" width="12" height="11.900" rx="1.300" fill="#fff" stroke="#7a7a7a" stroke-width="1.500"/></svg>
<div class="t" style="left:622.75px;top:515.70px;font-size:13px;color:#454545;transform:scaleX(0.9362);">Thứ 6</div>
<svg class="ic" style="left:675.2px;top:517.2px" width="13.5" height="13.4" viewBox="0 0 13.500 13.400" ><rect x="0.750" y="0.750" width="12" height="11.900" rx="1.300" fill="#fff" stroke="#7a7a7a" stroke-width="1.500"/></svg>
<div class="t" style="left:694.75px;top:515.70px;font-size:13px;color:#454545;transform:scaleX(0.9362);">Thứ 7</div>
<svg class="ic" style="left:747.2px;top:517.2px" width="13.5" height="13.4" viewBox="0 0 13.500 13.400" ><rect x="0.750" y="0.750" width="12" height="11.900" rx="1.300" fill="#fff" stroke="#7a7a7a" stroke-width="1.500"/></svg>
<div class="t" style="left:766.75px;top:515.70px;font-size:13px;color:#454545;transform:scaleX(0.9571);">Chủ nhật</div>
<div class="t" style="left:181.25px;top:552.50px;font-size:13px;color:#525252;transform:scaleX(0.9626);">Giờ bắt đầu</div>
<div class="inp" style="left:276px;top:547px;width:115px;height:35px;"></div>
<div class="t" style="left:399.25px;top:552.50px;font-size:13px;color:#525252;transform:scaleX(0.9658);">Giờ kết thúc</div>
<div class="inp" style="left:494px;top:547px;width:115px;height:35px;"></div>
<svg class="ic" style="left:367px;top:556.7px" width="16" height="16" viewBox="0 0 16 16" ><g fill="none" stroke="#6e6e6e" stroke-width="1.300"><circle cx="8" cy="9" r="6"/><path d="M8 5.500V9.300l2.300 1.600" stroke-linecap="round"/><path d="M1.200 3.800L4 1.400M14.800 3.800L12 1.400" stroke-linecap="round"/></g></svg>
<svg class="ic" style="left:585px;top:556.7px" width="16" height="16" viewBox="0 0 16 16" ><g fill="none" stroke="#6e6e6e" stroke-width="1.300"><circle cx="8" cy="9" r="6"/><path d="M8 5.500V9.300l2.300 1.600" stroke-linecap="round"/><path d="M1.200 3.800L4 1.400M14.800 3.800L12 1.400" stroke-linecap="round"/></g></svg>
<div class="t b" style="left:173.75px;top:592.75px;font-size:16px;color:#757575;transform:scaleX(0.8758);">KHUYẾN MẠI</div>
<div class="t b" style="left:181.25px;top:627.50px;font-size:13px;color:#454545;transform:scaleX(0.9244);">Điều kiện mua để được hưởng khuyến mại</div>
<svg class="ic" style="left:182.6px;top:665.9px" width="16" height="16" viewBox="0 0 16 16" ><circle cx="8" cy="8" r="6.800" fill="#fff" stroke="#2b3173" stroke-width="1.800"/><circle cx="8" cy="8" r="4.100" fill="#2b3173"/></svg>
<div class="t" style="left:203px;top:665.50px;font-size:13px;color:#262626;transform:scaleX(0.9756);">Hàng hóa</div>
<svg class="ic" style="left:359.5px;top:665.9px" width="16" height="16" viewBox="0 0 16 16" ><circle cx="8" cy="8" r="7.100" fill="#fff" stroke="#787878" stroke-width="1.400"/></svg>
<div class="t" style="left:380px;top:665.50px;font-size:13px;color:#262626;transform:scaleX(0.9955);">Mẫu mã</div>
<svg class="ic" style="left:537px;top:665.9px" width="16" height="16" viewBox="0 0 16 16" ><circle cx="8" cy="8" r="7.100" fill="#fff" stroke="#787878" stroke-width="1.400"/></svg>
<div class="t" style="left:557px;top:665.50px;font-size:13px;color:#262626;transform:scaleX(0.9864);">Nhóm hàng hóa</div>
<div class="t" style="left:181.250px;top:696.750px;font-size:13px;color:#444;transform:scaleX(0.958)">Mua <b style="color:#333">1 trong những</b> hàng hóa sau</div>
<div class="a" style="left:181px;top:722px;width:522px;height:64px;border:1px solid #dddddd;border-bottom:none;border-right:none;background:#fff"></div>
<div class="a" style="left:182px;top:723px;width:521px;height:32px;background:#f0f0f0"></div>
<div class="a" style="left:182px;top:755px;width:521px;height:1px;background:#dddddd"></div>
<div class="a" style="left:311px;top:723px;width:1px;height:63px;background:#dddddd"></div>
<div class="a" style="left:461px;top:723px;width:1px;height:63px;background:#dddddd"></div>
<div class="a" style="left:621px;top:723px;width:1px;height:63px;background:#dddddd"></div>
<div class="a" style="left:691px;top:723px;width:1px;height:63px;background:#dddddd"></div>
<div class="a" style="left:703px;top:755px;width:1px;height:31px;background:#dddddd"></div>
<div class="a" style="left:312px;top:757px;width:149px;height:29px;background:#f0f0f0"></div>
<div class="t b" style="left:223.25px;top:730.10px;font-size:13px;color:#212121;transform:scaleX(0.9365);">Mã SKU</div>
<div class="t b" style="left:347.5px;top:730.10px;font-size:13px;color:#212121;transform:scaleX(0.9261);">Tên hàng hóa</div>
<div class="t b" style="left:510px;top:730.10px;font-size:13px;color:#212121;transform:scaleX(0.9129);">Đơn vị tính</div>
<div class="t b" style="left:649.25px;top:730.10px;font-size:13px;color:#212121;transform:scaleX(0.8729);">SL</div>
<div class="t" style="left:191.7px;top:764.00px;font-size:13px;color:#454545;transform:scaleX(0.9479);">AKND01-XA-S</div>
<div class="t" style="left:322px;top:764.00px;font-size:13px;color:#777;transform:scaleX(0.9701);">Áo khoác nhung dài ...</div>
<div class="t" style="left:472px;top:764.00px;font-size:13px;color:#454545;transform:scaleX(0.9779);">Chiếc</div>
<div class="t" style="left:656.75px;top:764.00px;font-size:13px;color:#454545;transform:scaleX(0.9486);">1,00</div>
<div class="a" style="left:717px;top:620px;width:1px;height:167px;background:#dddddd"></div>
<div class="t b" style="left:732.3px;top:627.60px;font-size:13px;color:#454545;transform:scaleX(0.9255);">Hàng hóa được tặng</div>
<svg class="ic" style="left:734.2px;top:654.4px" width="16" height="16" viewBox="0 0 16 16" ><circle cx="8" cy="8" r="7.100" fill="#fff" stroke="#787878" stroke-width="1.400"/></svg>
<div class="t" style="left:754.4px;top:653.20px;font-size:13px;color:#262626;transform:scaleX(0.9874);">Hàng hóa cụ thể</div>
<svg class="ic" style="left:866.3px;top:654.4px" width="16" height="16" viewBox="0 0 16 16" ><circle cx="8" cy="8" r="6.800" fill="#fff" stroke="#2b3173" stroke-width="1.800"/><circle cx="8" cy="8" r="4.100" fill="#2b3173"/></svg>
<div class="t" style="left:887.3px;top:653.20px;font-size:13px;color:#262626;transform:scaleX(0.9906);">Hàng hóa rẻ nhất trong các hàng hóa điều kiện mua</div>
<div class="t" style="left:732.3px;top:685.60px;font-size:13px;color:#525252;transform:scaleX(0.9677);">Số lượng hàng tặng</div>
<div class="t" style="left:847.4px;top:686.70px;font-size:15px;color:#f5444a;transform:scaleX(0.9936);">*</div>
<div class="inp" style="left:724px;top:712px;width:150px;height:35px;"></div>
<div class="t" style="left:815.4px;top:719.50px;font-size:13px;color:#454545;transform:scaleX(0.9130);">1,00</div>
<svg class="ic" style="left:856.7px;top:719.5px" width="8.4" height="4.4" viewBox="0 0 8.400 4.400" ><path d="M0 4.400L4.200 0l4.200 4.400z" fill="#222"/></svg>
<svg class="ic" style="left:856.7px;top:733.3px" width="8.4" height="4.4" viewBox="0 0 8.400 4.400" ><path d="M0 0h8.400L4.200 4.400z" fill="#222"/></svg>
<div class="a" style="left:1262px;top:177px;width:17px;height:609px;background:#f1f1f1"></div>
<div class="a" style="left:1264px;top:194px;width:13px;height:334px;background:#c1c1c1"></div>
<svg class="ic" style="left:1266.5px;top:183.5px" width="8" height="4.5" viewBox="0 0 8 4.500" ><path d="M0 4.500L4 0l4 4.500z" fill="#a3a3a3"/></svg>
<svg class="ic" style="left:1266.5px;top:774.5px" width="8" height="4.5" viewBox="0 0 8 4.500" ><path d="M0 0h8L4 4.500z" fill="#505050"/></svg>
</body>
</html>
